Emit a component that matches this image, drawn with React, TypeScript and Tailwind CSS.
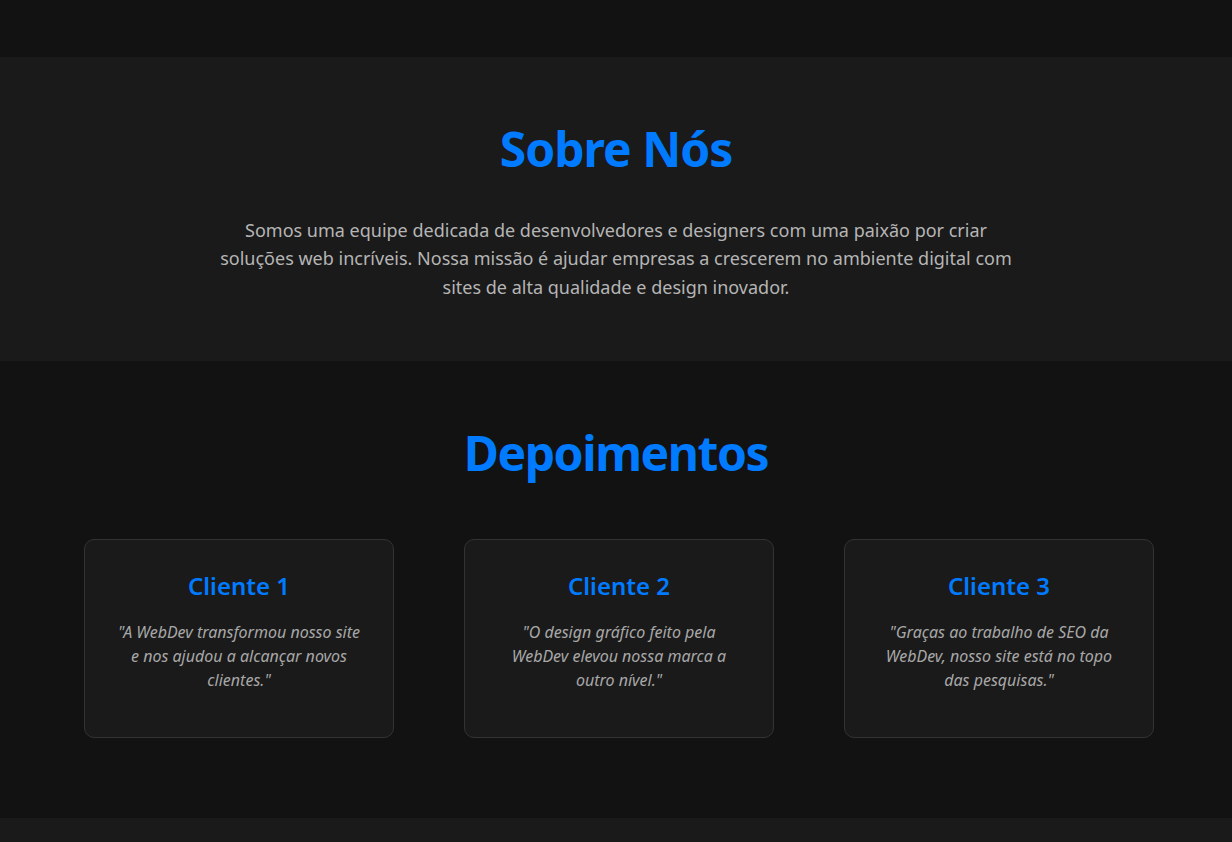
import React from "react";

const font = { fontFamily: '"Noto Sans", "Open Sans", sans-serif' };

const testimonials = [
  { name: "Cliente 1", text: '"A WebDev transformou nosso site e nos ajudou a alcançar novos clientes."' },
  { name: "Cliente 2", text: '"O design gráfico feito pela WebDev elevou nossa marca a outro nível."' },
  { name: "Cliente 3", text: '"Graças ao trabalho de SEO da WebDev, nosso site está no topo das pesquisas."' },
];

export default function App() {
  return (
    <div className="min-h-[842px] bg-[#121212]" style={font}>
      <div className="h-[57px] bg-[#121212]" />
      <section className="bg-[#1a1a1a] pt-[63px] pb-[59px] text-center">
        <h2 className="text-[48px] leading-[1.2] font-bold tracking-[-1px] text-[#007bff] mb-[38px]">Sobre Nós</h2>
        <p className="mx-auto max-w-[800px] text-[18px] leading-[1.6] text-[#b5b5b5]">
          Somos uma equipe dedicada de desenvolvedores e designers com uma paixão por criar soluções web incríveis. Nossa missão é ajudar empresas a crescerem no ambiente digital com sites de alta qualidade e design inovador.
        </p>
      </section>
      <section className="bg-[#121212] pt-[63px] pb-[80px] text-center">
        <h2 className="text-[48px] leading-[1.2] font-bold tracking-[-1.4px] text-[#007bff] mb-[57px]">Depoimentos</h2>
        <div className="flex gap-[70px] pl-[84px] pr-[78px]">
          {testimonials.map((t) => (
            <div key={t.name} className="flex-1 bg-[#1a1a1a] border border-[#333333] rounded-[10px] px-[30px] pt-[32px] pb-[45px]">
              <h3 className="text-[24px] leading-[1.2] font-semibold text-[#007bff] mb-[20px]">{t.name}</h3>
              <p className="text-[16px] leading-[24px] italic text-[#a8a8a8]">{t.text}</p>
            </div>
          ))}
        </div>
      </section>
      <footer className="bg-[#1a1a1a] h-[60px]" />
    </div>
  );
}
